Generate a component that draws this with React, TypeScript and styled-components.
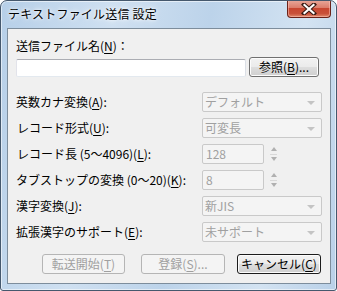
import React from 'react';
import styled, { createGlobalStyle } from 'styled-components';

const GlobalStyle = createGlobalStyle`
  html, body {
    margin: 0;
    padding: 0;
    background: #ffffff;
  }
  body {
    font-family: 'Noto Sans CJK JP', 'Liberation Sans', sans-serif;
    font-size: 12px;
  }
`;

// ウィンドウ枠 (Aero風)
const Window = styled.div`
  box-sizing: border-box;
  width: 337px;
  height: 291px;
  border: 1px solid #45586d;
  border-radius: 7px 7px 3px 3px;
  background: linear-gradient(100deg, #b6cfe8 0%, #cfe0f1 30%, #bcd3ea 55%, #d3e3f2 80%, #b9d0e8 100%);
  box-shadow: inset 0 0 0 1px rgba(255, 255, 255, 0.55);
  display: flex;
  flex-direction: column;
  overflow: hidden;
`;

const TitleBar = styled.div`
  height: 27px;
  display: flex;
  justify-content: space-between;
  align-items: flex-start;
  padding: 0 5px 0 7px;
`;

const TitleText = styled.div`
  margin-top: 5px;
  line-height: 16px;
  font-size: 12px;
  color: #000;
  text-shadow: 0 0 6px #ffffff, 0 0 3px #ffffff;
  letter-spacing: 0.2px;
`;

const CloseButton = styled.div`
  box-sizing: border-box;
  width: 44px;
  height: 18px;
  margin-top: -1px;
  border: 1px solid #6b2219;
  border-top: none;
  border-radius: 0 0 4px 4px;
  background: linear-gradient(180deg, #e9a99c 0%, #dc7d6b 45%, #c84630 50%, #c9513a 80%, #e08a6c 100%);
  box-shadow: inset 0 0 0 1px rgba(255, 200, 190, 0.5);
  display: flex;
  align-items: center;
  justify-content: center;
`;

const Client = styled.div`
  box-sizing: border-box;
  margin: 0 5px 0 6px;
  height: 256px;
  border: 1px solid #7d8d9c;
  background: #f0f0f0;
  padding: 9px 8px 0 8px;
  display: flex;
  flex-direction: column;
`;

const Label = styled.div<{ $indent?: number }>`
  line-height: 16px;
  color: #000;
  white-space: nowrap;
  padding-left: ${p => p.$indent ?? 0}px;
`;

const FileRow = styled.div`
  display: flex;
  align-items: flex-start;
  gap: 3px;
  margin-top: 3px;
`;

const TextInput = styled.div`
  box-sizing: border-box;
  width: 230px;
  height: 18px;
  margin-top: 2px;
  background: #fff;
  border: 1px solid;
  border-color: #abadb3 #dbdfe6 #e3e9ef #e2e3ea;
  border-radius: 2px;
`;

const Button = styled.div<{ $disabled?: boolean; $default?: boolean; $width: number; $left?: number }>`
  box-sizing: border-box;
  width: ${p => p.$width}px;
  height: 20px;
  margin-left: ${p => p.$left ?? 0}px;
  border: 1px solid ${p => (p.$disabled ? '#b5b5b5' : p.$default ? '#1c1c1c' : '#707070')};
  border-radius: 3px;
  background: ${p =>
    p.$disabled
      ? '#f4f4f4'
      : 'linear-gradient(180deg, #f2f2f2 0%, #ebebeb 48%, #dddddd 52%, #cfcfcf 100%)'};
  box-shadow: inset 0 0 0 1px ${p => (p.$disabled ? '#f4f4f4' : '#fcfcfc')};
  color: ${p => (p.$disabled ? '#a0a0a0' : '#000')};
  display: flex;
  align-items: center;
  justify-content: center;
  line-height: 16px;
  white-space: nowrap;
`;

const Grid = styled.div`
  display: grid;
  grid-template-columns: 186px 1fr;
  grid-auto-rows: 20px;
  row-gap: 6px;
  margin-top: 15px;
  align-items: center;
`;

const Combo = styled.div`
  box-sizing: border-box;
  width: 120px;
  height: 20px;
  border: 1px solid #c9c9c9;
  border-radius: 2px;
  background: #f4f4f4;
  color: #a0a0a0;
  display: flex;
  align-items: center;
  justify-content: space-between;
  padding: 0 6px 0 2px;
  line-height: 16px;
`;

const Arrow = styled.span`
  width: 0;
  height: 0;
  border-left: 4px solid transparent;
  border-right: 4px solid transparent;
  border-top: 4px solid #c4c4c4;
  margin-top: 2px;
`;

const SpinRow = styled.div`
  display: flex;
  align-items: center;
  gap: 5px;
`;

const SpinInput = styled.div`
  box-sizing: border-box;
  width: 62px;
  height: 20px;
  border: 1px solid #c9c9c9;
  border-radius: 2px;
  background: #f4f4f4;
  color: #a0a0a0;
  padding-left: 3px;
  line-height: 18px;
`;

const Spinner = styled.div`
  width: 9px;
  height: 18px;
  display: flex;
  flex-direction: column;
  align-items: center;
  justify-content: space-between;
  padding: 2px 0;
  box-sizing: border-box;
`;

const SpinUp = styled.span`
  width: 0;
  height: 0;
  border-left: 3px solid transparent;
  border-right: 3px solid transparent;
  border-bottom: 4px solid #b0b0b0;
`;

const SpinDown = styled.span`
  width: 0;
  height: 0;
  border-left: 3px solid transparent;
  border-right: 3px solid transparent;
  border-top: 4px solid #b0b0b0;
`;

const SpinLine = styled.span`
  width: 7px;
  height: 1px;
  background: #d8d8d8;
`;

const ButtonRow = styled.div`
  display: flex;
  margin-top: 12px;
  padding-left: 26px;
`;

const U = styled.span`
  text-decoration: underline;
  text-underline-offset: 2px;
`;

const CloseIcon = () => (
  <svg width="16" height="12" viewBox="0 0 16 12">
    <path d="M3 1.5 L13 10.5 M13 1.5 L3 10.5" stroke="#3a1a14" strokeWidth="4.2" strokeLinecap="square" />
    <path d="M3.5 2 L12.5 10 M12.5 2 L3.5 10" stroke="#ffffff" strokeWidth="2.2" strokeLinecap="square" />
  </svg>
);

const ComboBox = ({ value }: { value: string }) => (
  <Combo>
    <span>{value}</span>
    <Arrow />
  </Combo>
);

const SpinBox = ({ value }: { value: string }) => (
  <SpinRow>
    <SpinInput>{value}</SpinInput>
    <Spinner>
      <SpinUp />
      <SpinLine />
      <SpinDown />
    </Spinner>
  </SpinRow>
);

export default function App() {
  return (
    <>
      <GlobalStyle />
      <Window>
        <TitleBar>
          <TitleText>テキストファイル送信 設定</TitleText>
          <CloseButton>
            <CloseIcon />
          </CloseButton>
        </TitleBar>
        <Client>
          <Label>
            送信ファイル名(<U>N</U>)：
          </Label>
          <FileRow>
            <TextInput />
            <Button $width={70}>
              参照(<U>B</U>)...
            </Button>
          </FileRow>

          <Grid>
            <Label>
              英数カナ変換(<U>A</U>):
            </Label>
            <ComboBox value="デフォルト" />

            <Label $indent={1}>
              レコード形式(<U>U</U>):
            </Label>
            <ComboBox value="可変長" />

            <Label $indent={1}>
              レコード長 (5～4096)(<U>L</U>):
            </Label>
            <SpinBox value="128" />

            <Label>
              タブストップの変換 (0～20)(<U>K</U>):
            </Label>
            <SpinBox value="8" />

            <Label>
              漢字変換(<U>J</U>):
            </Label>
            <ComboBox value="新JIS" />

            <Label>
              拡張漢字のサポート(<U>E</U>):
            </Label>
            <ComboBox value="未サポート" />
          </Grid>

          <ButtonRow>
            <Button $width={83} $disabled>
              転送開始(<U>T</U>)
            </Button>
            <Button $width={84} $left={16} $disabled>
              登録(<U>S</U>)...
            </Button>
            <Button $width={84} $left={12} $default>
              キャンセル(<U>C</U>)
            </Button>
          </ButtonRow>
        </Client>
      </Window>
    </>
  );
}
